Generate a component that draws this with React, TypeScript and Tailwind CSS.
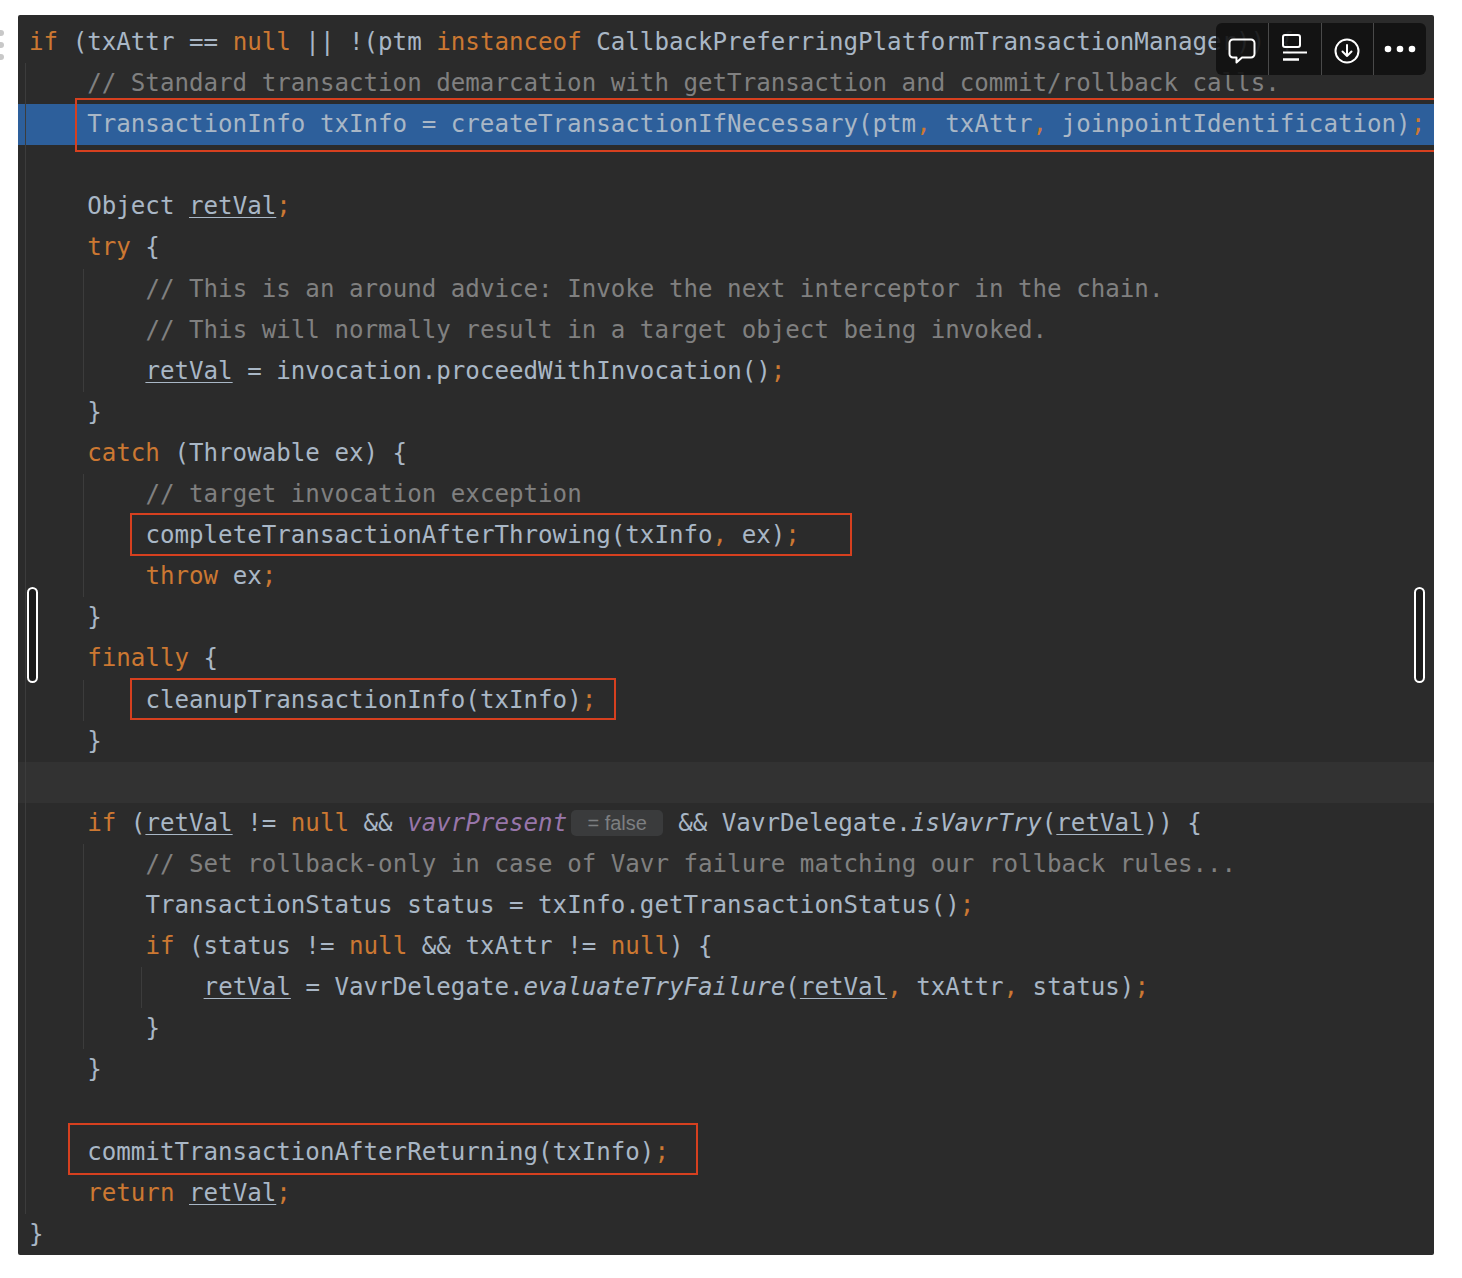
type Kind = "p" | "k" | "c" | "s" | "u" | "i" | "v" | "hint";
type Tok = [Kind, string];

const KIND_CLASS: Record<Kind, string> = {
  p: "text-[#a9b7c6]",
  k: "text-[#cc7832]",
  c: "text-[#808080]",
  s: "text-[#cc7832]",
  u: "text-[#a9b7c6] underline decoration-1 underline-offset-[3px]",
  i: "text-[#a9b7c6] italic",
  v: "text-[#9876aa] italic",
  hint: "",
};

type Line = {
  indent: number;
  toks: Tok[];
  guides?: number[];
  bg?: string;
};

const p = (t: string): Tok => ["p", t];
const k = (t: string): Tok => ["k", t];
const c = (t: string): Tok => ["c", t];
const u = (t: string): Tok => ["u", t];
const semi: Tok = ["s", ";"];

const LINES: Line[] = [
  {
    indent: 0,
    toks: [k("if"), p(" (txAttr == "), k("null"), p(" || !(ptm "), k("instanceof"), p(" CallbackPreferringPlatformTransactionManager)) {")],
  },
  { indent: 1, guides: [0], toks: [c("// Standard transaction demarcation with getTransaction and commit/rollback calls.")] },
  {
    indent: 1,
    guides: [0],
    bg: "bg-[#2d5f9b]",
    toks: [p("TransactionInfo txInfo = createTransactionIfNecessary(ptm"), ["s", ","], p(" txAttr"), ["s", ","], p(" joinpointIdentification)"), semi],
  },
  { indent: 0, guides: [0], toks: [] },
  { indent: 1, guides: [0], toks: [p("Object "), u("retVal"), semi] },
  { indent: 1, guides: [0], toks: [k("try"), p(" {")] },
  { indent: 2, guides: [0, 1], toks: [c("// This is an around advice: Invoke the next interceptor in the chain.")] },
  { indent: 2, guides: [0, 1], toks: [c("// This will normally result in a target object being invoked.")] },
  { indent: 2, guides: [0, 1], toks: [u("retVal"), p(" = invocation.proceedWithInvocation()"), semi] },
  { indent: 1, guides: [0], toks: [p("}")] },
  { indent: 1, guides: [0], toks: [k("catch"), p(" (Throwable ex) {")] },
  { indent: 2, guides: [0, 1], toks: [c("// target invocation exception")] },
  { indent: 2, guides: [0, 1], toks: [p("completeTransactionAfterThrowing(txInfo"), ["s", ","], p(" ex)"), semi] },
  { indent: 2, guides: [0, 1], toks: [k("throw"), p(" ex"), semi] },
  { indent: 1, guides: [0], toks: [p("}")] },
  { indent: 1, guides: [0], toks: [k("finally"), p(" {")] },
  { indent: 2, guides: [0, 1], toks: [p("cleanupTransactionInfo(txInfo)"), semi] },
  { indent: 1, guides: [0], toks: [p("}")] },
  { indent: 0, guides: [0], bg: "bg-[#323232]", toks: [] },
  {
    indent: 1,
    guides: [0],
    toks: [
      k("if"),
      p(" ("),
      u("retVal"),
      p(" != "),
      k("null"),
      p(" && "),
      ["v", "vavrPresent"],
      ["hint", "= false"],
      p("&& VavrDelegate."),
      ["i", "isVavrTry"],
      p("("),
      u("retVal"),
      p(")) {"),
    ],
  },
  { indent: 2, guides: [0, 1], toks: [c("// Set rollback-only in case of Vavr failure matching our rollback rules...")] },
  { indent: 2, guides: [0, 1], toks: [p("TransactionStatus status = txInfo.getTransactionStatus()"), semi] },
  { indent: 2, guides: [0, 1], toks: [k("if"), p(" (status != "), k("null"), p(" && txAttr != "), k("null"), p(") {")] },
  {
    indent: 3,
    guides: [0, 1, 2],
    toks: [u("retVal"), p(" = VavrDelegate."), ["i", "evaluateTryFailure"], p("("), u("retVal"), ["s", ","], p(" txAttr"), ["s", ","], p(" status)"), semi],
  },
  { indent: 2, guides: [0, 1], toks: [p("}")] },
  { indent: 1, guides: [0], toks: [p("}")] },
  { indent: 0, guides: [0], toks: [] },
  { indent: 1, guides: [0], toks: [p("commitTransactionAfterReturning(txInfo)"), semi] },
  { indent: 1, guides: [0], toks: [k("return"), p(" "), u("retVal"), semi] },
  { indent: 0, toks: [p("}")] },
];

const GUIDE_X = ["left-[7px]", "left-[65px]", "left-[123px]"];
const INDENT = ["pl-0", "pl-[58.2px]", "pl-[116.4px]", "pl-[174.6px]"];

function Token({ tok }: { tok: Tok }) {
  const [kind, text] = tok;
  if (kind === "hint") {
    return (
      <span className="mx-[4px] mr-[15px] inline-block h-[26px] w-[92px] translate-y-[-1px] rounded-[5px] bg-[#3a3b3c] text-center align-middle font-['Liberation_Sans',sans-serif] text-[20px] leading-[26px] whitespace-pre text-[#7d7f81]">
        {text}
      </span>
    );
  }
  return <span className={KIND_CLASS[kind]}>{text}</span>;
}

function CodeLine({ line }: { line: Line }) {
  return (
    <div className={`relative h-[41.1px] pl-[11px] leading-[41.1px] whitespace-pre ${line.bg ?? ""}`}>
      {line.guides?.map((g) => (
        <span key={g} className={`absolute top-0 bottom-0 w-px bg-[#3c3c3c] ${GUIDE_X[g]}`} />
      ))}
      <div className={`relative ${INDENT[line.indent]}`}>
        {line.toks.map((t, i) => (
          <Token key={i} tok={t} />
        ))}
      </div>
    </div>
  );
}

function Handle({ side }: { side: string }) {
  return <div className={`absolute top-[572px] h-[96px] w-[11px] rounded-full border-2 border-white bg-[#1b1b1b] ${side}`} />;
}

function Toolbar() {
  return (
    <div className="absolute top-[8px] left-[1198px] flex h-[52px] w-[210px] divide-x divide-[#4a4a4a] rounded-[6px] bg-[#111111]/90 text-white">
      <button className="flex flex-1 items-center justify-center">
        <svg width="30" height="30" viewBox="0 0 30 30" fill="none" stroke="currentColor" strokeWidth="2" className="mt-[3px]">
          <path d="M6 3.5h18a3.5 3.5 0 0 1 3.5 3.5v11a3.5 3.5 0 0 1-3.5 3.5h-9l-5.5 5v-5H6A3.5 3.5 0 0 1 2.500 18V7A3.500 3.500 0 0 1 6 3.500z" strokeLinejoin="round" />
        </svg>
      </button>
      <button className="flex flex-1 items-center justify-center">
        <svg width="30" height="30" viewBox="0 0 30 30" fill="none" stroke="currentColor" strokeWidth="2">
          <rect x="3" y="1" width="17" height="12" rx="2" />
          <path d="M3 18.500h24" />
          <path d="M3 25.500h16" strokeWidth="2.500" />
        </svg>
      </button>
      <button className="flex flex-1 items-center justify-center">
        <svg width="28" height="28" viewBox="0 0 28 28" fill="none" stroke="currentColor" strokeWidth="2" className="mt-[4px]">
          <circle cx="14" cy="14" r="11.500" />
          <path d="M14 8v11M9.500 14.500 14 19l4.500-4.500" strokeLinecap="round" strokeLinejoin="round" />
        </svg>
      </button>
      <button className="flex flex-1 items-center justify-center">
        <svg width="32" height="10" viewBox="0 0 32 10" fill="currentColor">
          <circle cx="4" cy="5" r="3.300" />
          <circle cx="16" cy="5" r="3.300" />
          <circle cx="28" cy="5" r="3.300" />
        </svg>
      </button>
    </div>
  );
}

export default function App() {
  return (
    <div className="relative h-[1278px] w-[1462px] overflow-hidden bg-white pt-[15px] pl-[18px]">
      <div className="absolute top-[30px] left-0 flex flex-col gap-[6px]">
        <span className="h-[6px] w-[4px] rounded-r-full bg-[#c8c8c8]" />
        <span className="h-[6px] w-[4px] rounded-r-full bg-[#c8c8c8]" />
        <span className="h-[6px] w-[4px] rounded-r-full bg-[#c8c8c8]" />
      </div>
      <div className="relative h-[1240px] w-[1416px] overflow-hidden rounded-[2px] bg-[#2b2b2b] pt-[7px] font-['DejaVu_Sans_Mono',monospace] text-[24.17px]">
        {LINES.map((line, i) => (
          <CodeLine key={i} line={line} />
        ))}

        <div className="absolute top-[83px] left-[57px] h-[54px] w-[1360px] border-y-2 border-l-2 border-[#d6401f]" />
        <div className="absolute top-[498px] left-[112px] h-[43px] w-[722px] border-2 border-[#d6401f]" />
        <div className="absolute top-[663px] left-[112px] h-[42px] w-[486px] border-2 border-[#d6401f]" />
        <div className="absolute top-[1108px] left-[50px] h-[52px] w-[630px] border-2 border-[#d6401f]" />

        <Handle side="left-[9px]" />
        <Handle side="left-[1396px]" />
        <Toolbar />
      </div>
    </div>
  );
}
